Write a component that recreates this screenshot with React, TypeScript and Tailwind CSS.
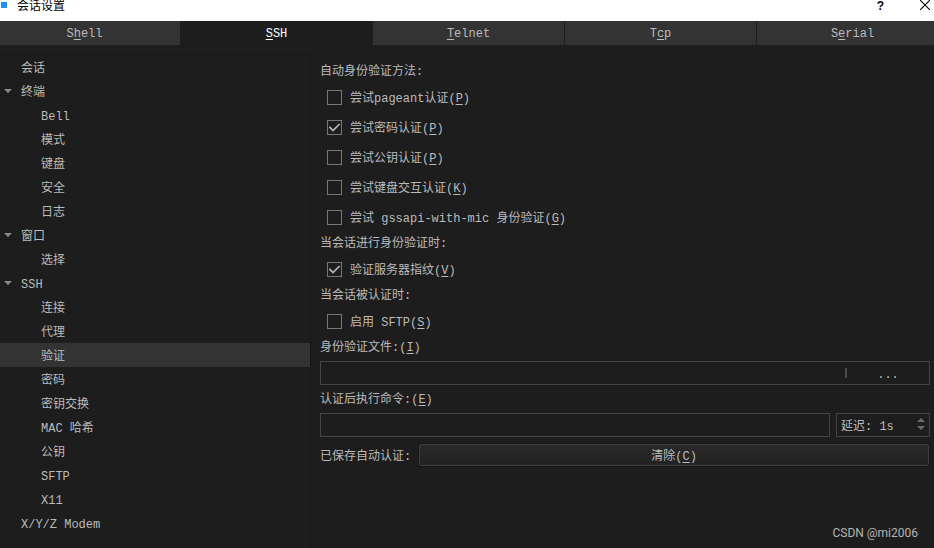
import React, { useState } from "react";
import { clsx } from "clsx";

interface TreeItem {
  id: string;
  label: string;
  child?: boolean;
  expandable?: boolean;
}

const tabs = [
  { id: "shell", before: "S", key: "h", after: "ell" },
  { id: "ssh", before: "", key: "S", after: "SH" },
  { id: "telnet", before: "", key: "T", after: "elnet" },
  { id: "tcp", before: "T", key: "c", after: "p" },
  { id: "serial", before: "S", key: "e", after: "rial" },
];

const treeItems: TreeItem[] = [
  { id: "session", label: "会话" },
  { id: "terminal", label: "终端", expandable: true },
  { id: "bell", label: "Bell", child: true },
  { id: "mode", label: "模式", child: true },
  { id: "keyboard", label: "键盘", child: true },
  { id: "security", label: "安全", child: true },
  { id: "log", label: "日志", child: true },
  { id: "window", label: "窗口", expandable: true },
  { id: "selection", label: "选择", child: true },
  { id: "ssh", label: "SSH", expandable: true },
  { id: "connection", label: "连接", child: true },
  { id: "proxy", label: "代理", child: true },
  { id: "auth", label: "验证", child: true },
  { id: "password", label: "密码", child: true },
  { id: "kex", label: "密钥交换", child: true },
  { id: "mac", label: "MAC 哈希", child: true },
  { id: "pubkey", label: "公钥", child: true },
  { id: "sftp", label: "SFTP", child: true },
  { id: "x11", label: "X11", child: true },
  { id: "modem", label: "X/Y/Z Modem" },
];

const methods = [
  { label: "尝试pageant认证", hotkey: "P" },
  { label: "尝试密码认证", hotkey: "P", checked: true },
  { label: "尝试公钥认证", hotkey: "P" },
  { label: "尝试键盘交互认证", hotkey: "K" },
  { label: "尝试 gssapi-with-mic 身份验证", hotkey: "G" },
];

const Hotkey = ({ children }: { children: React.ReactNode }) => (
  <span className="underline decoration-1 underline-offset-2">{children}</span>
);

interface CheckRowProps {
  label: string;
  hotkey: string;
  checked?: boolean;
}

const CheckRow: React.FC<CheckRowProps> = ({ label, hotkey, checked = false }) => (
  <label className="ml-[7px] flex h-6 items-center gap-2 self-start">
    <span className="grid size-[15px]">
      <input
        type="checkbox"
        defaultChecked={checked}
        className="peer col-start-1 row-start-1 size-[15px] appearance-none border border-[#777777]"
      />
      <svg
        viewBox="0 0 15 15"
        className="pointer-events-none invisible col-start-1 row-start-1 size-[15px] peer-checked:visible"
        fill="none"
        stroke="#b8b8b8"
        strokeWidth="1.7"
      >
        <path d="M2.4 6.8 6 10.6 12.6 4" />
      </svg>
    </span>
    <span className="pt-[3px]">
      {label}(<Hotkey>{hotkey}</Hotkey>)
    </span>
  </label>
);

const TitleBar = () => (
  <header className="flex h-[21px] items-start justify-between bg-white text-black">
    <div className="flex items-start pl-px">
      <span className="mt-0.5 size-1.5 bg-[#1e90ff]" />
      <h1 className="ml-2.5 leading-3.5">会话设置</h1>
    </div>
    <div className="flex items-start gap-9 pr-1">
      <button type="button" aria-label="Help" className="font-['Liberation_Sans',sans-serif] leading-3 font-bold">
        ?
      </button>
      <button type="button" aria-label="Close">
        <svg viewBox="0 0 10 10" className="size-2.5" stroke="#000" strokeWidth="1.1">
          <path d="M0 0 10 10M10 0 0 10" />
        </svg>
      </button>
    </div>
  </header>
);

const App: React.FC = () => {
  const [tab, setTab] = useState("ssh");
  const [selected, setSelected] = useState("auth");

  return (
    <div className="relative flex min-h-screen flex-col overflow-hidden bg-[#1d1d1d] font-['Liberation_Mono','Noto_Sans_CJK_SC',monospace] text-[12px] leading-[18px] text-[#bbbbbb]">
      <TitleBar />

      {/* the strip runs past both window edges */}
      <div className="overflow-hidden">
        <div role="tablist" className="-mr-3.5 -ml-3 grid grid-cols-5">
          {tabs.map((t) => (
            <button
              key={t.id}
              type="button"
              role="tab"
              aria-selected={tab === t.id}
              onClick={() => setTab(t.id)}
              className={clsx(
                "h-6 border-l border-[#1d1d1d] pt-0.5",
                tab === t.id ? "bg-[#1d1d1d] text-white" : "bg-[#333333]"
              )}
            >
              {t.before}
              <Hotkey>{t.key}</Hotkey>
              {t.after}
            </button>
          ))}
        </div>
      </div>

      <div className="flex grow pt-[9px]">
        <nav className="w-1/3 max-w-[311px] shrink-0 border-t border-r border-[#161616]">
          <ul>
            {treeItems.map((item) => (
              <li key={item.id}>
                <button
                  type="button"
                  onClick={() => setSelected(item.id)}
                  className={clsx(
                    "flex h-6 w-full items-center text-left",
                    item.child ? "pl-[41px]" : item.expandable ? "gap-[9px] pl-1" : "pl-[21px]",
                    selected === item.id && "bg-[#333333]"
                  )}
                >
                  {item.expandable && (
                    <svg viewBox="0 0 8 4" className="h-1 w-2" fill="#8a8a8a">
                      <path d="M0 0H8L4 4Z" />
                    </svg>
                  )}
                  <span className="pt-[3px]">{item.label}</span>
                </button>
              </li>
            ))}
          </ul>
        </nav>

        <main className="flex min-w-0 grow flex-col gap-1.5 pt-[9px] pr-1 pl-[9px]">
          <p className="h-4">自动身份验证方法:</p>
          {methods.map((m) => (
            <CheckRow key={m.label} {...m} />
          ))}

          <p className="h-4">当会话进行身份验证时:</p>
          <CheckRow label="验证服务器指纹" hotkey="V" checked />

          <p className="h-4">当会话被认证时:</p>
          <CheckRow label="启用 SFTP" hotkey="S" />

          <label htmlFor="identity" className="h-4">
            身份验证文件:(<Hotkey>I</Hotkey>)
          </label>
          <div className="flex h-6 items-center border border-[#444444]">
            <input id="identity" type="text" className="min-w-0 grow px-1 outline-none" />
            <span className="h-2.5 w-0.5 bg-[#4a4a4a]" />
            <button type="button" aria-label="Browse" className="w-[82px] pt-[3px]">
              ...
            </button>
          </div>

          <label htmlFor="command" className="h-4">
            认证后执行命令:(<Hotkey>E</Hotkey>)
          </label>
          <div className="flex gap-1.5">
            <input
              id="command"
              type="text"
              className="h-6 min-w-0 grow border border-[#444444] px-1 outline-none"
            />
            <div className="flex h-6 w-[94px] items-center border border-[#444444] px-1">
              <input
                type="text"
                aria-label="延迟"
                defaultValue="延迟: 1s"
                className="min-w-0 grow pt-[3px] outline-none"
              />
              <div className="flex flex-col gap-1 pb-0.5">
                <button type="button" aria-label="Increase">
                  <svg viewBox="0 0 8 4" className="h-1 w-2" fill="#6a6a6a">
                    <path d="M0 4H8L4 0Z" />
                  </svg>
                </button>
                <button type="button" aria-label="Decrease">
                  <svg viewBox="0 0 8 4" className="h-1 w-2" fill="#6a6a6a">
                    <path d="M0 0H8L4 4Z" />
                  </svg>
                </button>
              </div>
            </div>
          </div>

          <div className="flex h-6 items-center gap-2">
            <span className="shrink-0 pt-[3px]">已保存自动认证:</span>
            <button
              type="button"
              className="mr-px h-[22px] grow rounded-xs border border-[#404040] bg-linear-to-b from-[#2a2a2a] to-[#222222] pt-[3px] shadow-[0_0_0_1px_#151515]"
            >
              清除(<Hotkey>C</Hotkey>)
            </button>
          </div>
        </main>
      </div>

      <span className="absolute right-4 bottom-1.5 font-[Roboto,sans-serif] text-[12px] text-[#b4b4b4]">
        CSDN @mi2006
      </span>
    </div>
  );
};

export default App;
